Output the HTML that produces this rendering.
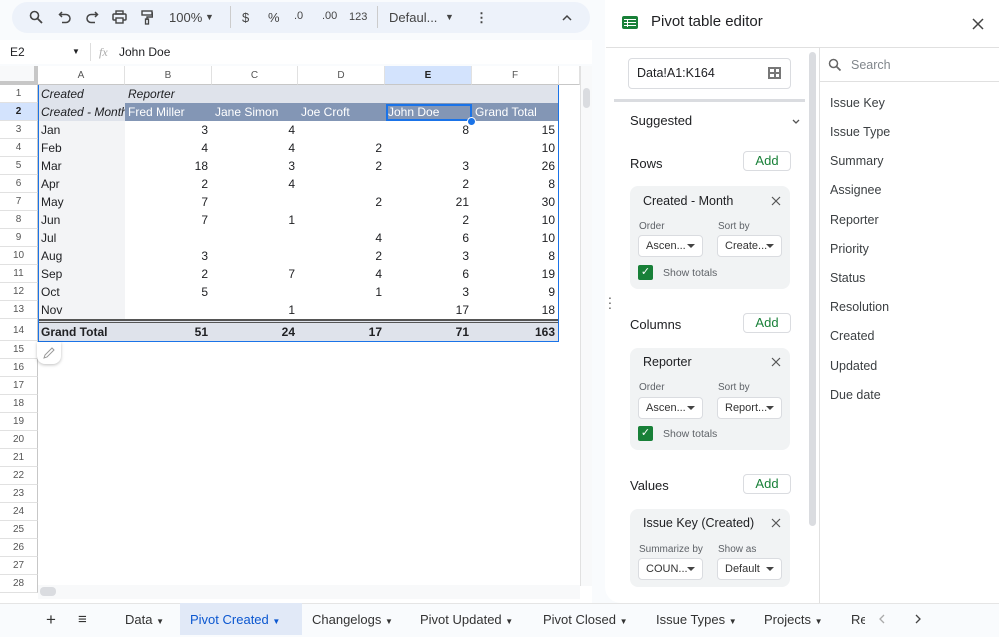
<!DOCTYPE html>
<html><head><meta charset="utf-8"><style>
*{box-sizing:border-box;margin:0;padding:0}
body{width:999px;height:635px;overflow:hidden;background:#f9fbfd;font-family:"Liberation Sans",Arial,sans-serif;position:relative;color:#202124}
.abs{position:absolute}
.tb{left:12px;top:2px;width:578px;height:31px;background:#edf2fa;border-radius:16px;font-size:13px;color:#444}
.tb span{position:absolute;top:8px}
.tb svg{position:absolute;top:8px}
.grid{left:0;top:66px;width:592px;height:537px;background:#fff}
.rh{position:absolute;left:0;width:38px;height:18px;font-size:10px;color:#555;text-align:center;line-height:18px;background:#fff;border-bottom:1px solid #e1e1e1;border-right:1px solid #c7c7c7}
.ch{position:absolute;top:0;height:19px;font-size:10px;color:#555;text-align:center;line-height:19px;border-right:1px solid #e1e1e1;border-bottom:1px solid #c7c7c7;background:#fff}
.c{position:absolute;height:18px;line-height:18px;font-size:12px;padding:0 3px;white-space:nowrap;overflow:hidden}
.panel{left:605px;top:0;width:394px;height:603px;background:#fff;border-radius:0 0 0 16px}
.card{position:absolute;left:630px;width:160px;background:#f1f3f4;border-radius:8px}
.sel{position:absolute;height:22px;border:1px solid #dadce0;background:#fff;border-radius:4px;font-size:11px;line-height:20px;padding-left:7px;color:#333}
.sel:after{content:"";position:absolute;right:7px;top:8px;border:4px solid transparent;border-top:4px solid #444}
.lbl{position:absolute;font-size:10px;color:#5f6368}
.add{position:absolute;left:743px;width:48px;height:20px;border:1px solid #dadce0;border-radius:4px;background:#fff;color:#188038;font-size:13px;text-align:center;line-height:18px}
.h{position:absolute;left:630px;font-size:13px;color:#202124}
.fld{position:absolute;left:830px;font-size:12.5px;color:#3c4043}
.x{position:absolute;width:12px;height:12px}
.chk{position:absolute;width:15px;height:15px;background:#188038;border-radius:2px;color:#fff;font-size:11px;text-align:center;line-height:15px}
.tab{position:absolute;top:604px;height:31px;line-height:31px;font-size:13px;color:#333}
</style></head><body>
<div class="abs tb">
<svg style="left:17px" width="14" height="14" viewBox="0 0 14 14"><circle cx="5.5" cy="5.5" r="4" fill="none" stroke="#444" stroke-width="1.6"/><path d="M8.5 8.5L13 13" stroke="#444" stroke-width="1.8"/></svg>
<svg style="left:46px" width="14" height="14" viewBox="0 0 14 14"><path d="M4 2L1.5 4.5 4 7M2 4.5h6a4 4 0 010 8H4" fill="none" stroke="#444" stroke-width="1.5"/></svg>
<svg style="left:73px" width="14" height="14" viewBox="0 0 14 14"><path d="M10 2l2.5 2.5L10 7M12 4.5H6a4 4 0 000 8h4" fill="none" stroke="#444" stroke-width="1.5"/></svg>
<svg style="left:100px" width="15" height="14" viewBox="0 0 15 14"><rect x="4" y="1" width="7" height="3" fill="none" stroke="#444" stroke-width="1.4"/><rect x="1" y="4" width="13" height="6" rx="1" fill="none" stroke="#444" stroke-width="1.5"/><rect x="4" y="8" width="7" height="5" fill="#edf2fa" stroke="#444" stroke-width="1.4"/></svg>
<svg style="left:129px" width="12" height="15" viewBox="0 0 12 15"><rect x="1" y="1" width="10" height="4" fill="none" stroke="#444" stroke-width="1.4"/><path d="M11 3h0.5v4H6v3" fill="none" stroke="#444" stroke-width="1.4"/><rect x="4.5" y="9" width="3" height="5" fill="none" stroke="#444" stroke-width="1.3"/></svg>
<span style="left:157px">100%</span><span style="left:193px;font-size:9px;top:10px">&#9660;</span>
<span style="left:218px;top:4px;width:1px;height:22px;background:#ccc"></span>
<span style="left:230px">$</span><span style="left:256px">%</span>
<span style="left:282px;font-size:11px">.0</span><span style="left:310px;font-size:11px">.00</span>
<span style="left:337px;font-size:11px;top:9px">123</span>
<span style="left:365px;top:4px;width:1px;height:22px;background:#ccc"></span>
<span style="left:377px">Defaul...</span><span style="left:433px;font-size:9px;top:10px">&#9660;</span>
<span style="left:463px;font-weight:bold">&#8942;</span>
<svg style="left:550px;top:12px" width="10" height="7" viewBox="0 0 10 7"><path d="M1 6l4-4 4 4" fill="none" stroke="#444" stroke-width="1.5"/></svg>
</div>
<div class="abs" style="left:0;top:40px;width:592px;height:24px;background:#fff;font-size:12px;line-height:24px">
<span class="abs" style="left:10px">E2</span><span class="abs" style="left:72px;font-size:8px">&#9660;</span>
<span class="abs" style="left:90px;top:3px;width:1px;height:18px;background:#ddd"></span>
<span class="abs" style="left:99px;color:#aaa;font-style:italic;font-family:'Liberation Serif',serif">fx</span>
<span class="abs" style="left:119px">John Doe</span></div>
<div class="abs grid">
<div class="ch" style="left:0;width:38px;background:#f8f9fa;border-right:4px solid #c7c7c7;border-bottom:4px solid #c7c7c7"></div>
<div class="ch" style="left:38px;width:87px">A</div><div class="ch" style="left:125px;width:87px">B</div><div class="ch" style="left:212px;width:86px">C</div><div class="ch" style="left:298px;width:87px">D</div><div class="ch" style="left:385px;width:87px;background:#d3e3fd;font-weight:bold;color:#222">E</div><div class="ch" style="left:472px;width:87px">F</div><div class="ch" style="left:559px;width:21px"></div>
<div class="abs" style="left:580px;top:0;width:12px;height:520px;background:#f8f9fa;border-left:1px solid #e1e1e1"></div>
<div class="abs" style="left:583px;top:22px;width:7px;height:20px;background:#dadce0;border-radius:4px"></div>
<div class="abs" style="left:38px;top:519px;width:542px;height:14px;background:#f8f9fa"></div>
<div class="abs" style="left:40px;top:521px;width:16px;height:9px;background:#dadce0;border-radius:4px"></div>
</div>
<div class="abs" style="left:0;top:85px;width:592px;height:500px">
<div class="rh" style="top:0">1</div><div class="rh" style="top:18px;background:#d3e3fd;font-weight:bold;color:#222">2</div><div class="rh" style="top:36px">3</div><div class="rh" style="top:54px">4</div><div class="rh" style="top:72px">5</div><div class="rh" style="top:90px">6</div><div class="rh" style="top:108px">7</div><div class="rh" style="top:126px">8</div><div class="rh" style="top:144px">9</div><div class="rh" style="top:162px">10</div><div class="rh" style="top:180px">11</div><div class="rh" style="top:198px">12</div><div class="rh" style="top:216px">13</div><div class="rh" style="top:234px;height:22px;line-height:24px">14</div><div class="rh" style="top:256px">15</div><div class="rh" style="top:274px">16</div><div class="rh" style="top:292px">17</div><div class="rh" style="top:310px">18</div><div class="rh" style="top:328px">19</div><div class="rh" style="top:346px">20</div><div class="rh" style="top:364px">21</div><div class="rh" style="top:382px">22</div><div class="rh" style="top:400px">23</div><div class="rh" style="top:418px">24</div><div class="rh" style="top:436px">25</div><div class="rh" style="top:454px">26</div><div class="rh" style="top:472px">27</div><div class="rh" style="top:490px">28</div>
<div class="abs" style="left:38px;top:0;width:521px;height:18px;background:#dfe3eb"></div>
<div class="abs" style="left:125px;top:18px;width:434px;height:18px;background:#8396b5"></div>
<div class="abs" style="left:38px;top:18px;width:87px;height:18px;background:#dfe3eb"></div>
<div class="abs" style="left:38px;top:36px;width:87px;height:198px;background:#f3f4f6"></div>
<div class="abs" style="left:38px;top:234px;width:521px;height:4px;border-top:2px solid #555;border-bottom:1px solid #555;background:#dfe3eb"></div>
<div class="abs" style="left:38px;top:238px;width:521px;height:18px;background:#dfe3eb"></div>
<div class="abs" style="left:38px;top:0;width:521px;height:257px;border:1px solid #1a73e8;border-top:0"></div>
<div class="abs" style="left:386px;top:19px;width:86px;height:17px;border:2px solid #1a73e8"></div>
<div class="abs" style="left:467px;top:32px;width:9px;height:9px;border-radius:50%;background:#1a73e8;border:1px solid #fff"></div>
<div class="c" style="left:38px;top:0;font-style:italic">Created</div><div class="c" style="left:125px;top:0;font-style:italic">Reporter</div>
<div class="c" style="left:38px;top:18px;font-style:italic;width:87px;padding-right:0">Created - Month</div>
<div class="c" style="left:125px;top:18px;color:#fff">Fred Miller</div><div class="c" style="left:212px;top:18px;color:#fff">Jane Simon</div><div class="c" style="left:298px;top:18px;color:#fff">Joe Croft</div><div class="c" style="left:385px;top:18px;color:#fff">John Doe</div><div class="c" style="left:472px;top:18px;color:#fff">Grand Total</div>
</div>
<div class="abs" style="left:38px;top:121px;width:521px;font-size:12px">
<table style="border-collapse:collapse;font-size:12px;table-layout:fixed;width:521px">
<colgroup><col style="width:87px"><col style="width:87px"><col style="width:86px"><col style="width:87px"><col style="width:87px"><col style="width:87px"></colgroup>
<tbody style="line-height:18px">
<tr><td style="padding-left:3px">Jan</td><td align=right style="padding-right:4px">3</td><td align=right style="padding-right:3px">4</td><td></td><td align=right style="padding-right:3px">8</td><td align=right style="padding-right:4px">15</td></tr>
<tr><td style="padding-left:3px">Feb</td><td align=right style="padding-right:4px">4</td><td align=right style="padding-right:3px">4</td><td align=right style="padding-right:3px">2</td><td></td><td align=right style="padding-right:4px">10</td></tr>
<tr><td style="padding-left:3px">Mar</td><td align=right style="padding-right:4px">18</td><td align=right style="padding-right:3px">3</td><td align=right style="padding-right:3px">2</td><td align=right style="padding-right:3px">3</td><td align=right style="padding-right:4px">26</td></tr>
<tr><td style="padding-left:3px">Apr</td><td align=right style="padding-right:4px">2</td><td align=right style="padding-right:3px">4</td><td></td><td align=right style="padding-right:3px">2</td><td align=right style="padding-right:4px">8</td></tr>
<tr><td style="padding-left:3px">May</td><td align=right style="padding-right:4px">7</td><td></td><td align=right style="padding-right:3px">2</td><td align=right style="padding-right:3px">21</td><td align=right style="padding-right:4px">30</td></tr>
<tr><td style="padding-left:3px">Jun</td><td align=right style="padding-right:4px">7</td><td align=right style="padding-right:3px">1</td><td></td><td align=right style="padding-right:3px">2</td><td align=right style="padding-right:4px">10</td></tr>
<tr><td style="padding-left:3px">Jul</td><td></td><td></td><td align=right style="padding-right:3px">4</td><td align=right style="padding-right:3px">6</td><td align=right style="padding-right:4px">10</td></tr>
<tr><td style="padding-left:3px">Aug</td><td align=right style="padding-right:4px">3</td><td></td><td align=right style="padding-right:3px">2</td><td align=right style="padding-right:3px">3</td><td align=right style="padding-right:4px">8</td></tr>
<tr><td style="padding-left:3px">Sep</td><td align=right style="padding-right:4px">2</td><td align=right style="padding-right:3px">7</td><td align=right style="padding-right:3px">4</td><td align=right style="padding-right:3px">6</td><td align=right style="padding-right:4px">19</td></tr>
<tr><td style="padding-left:3px">Oct</td><td align=right style="padding-right:4px">5</td><td></td><td align=right style="padding-right:3px">1</td><td align=right style="padding-right:3px">3</td><td align=right style="padding-right:4px">9</td></tr>
<tr><td style="padding-left:3px">Nov</td><td></td><td align=right style="padding-right:3px">1</td><td></td><td align=right style="padding-right:3px">17</td><td align=right style="padding-right:4px">18</td></tr>
<tr style="height:4px"><td colspan=6></td></tr>
<tr style="font-weight:bold"><td style="padding-left:3px">Grand Total</td><td align=right style="padding-right:4px">51</td><td align=right style="padding-right:3px">24</td><td align=right style="padding-right:3px">17</td><td align=right style="padding-right:3px">71</td><td align=right style="padding-right:4px">163</td></tr>
</tbody></table></div>
<div class="abs" style="left:37px;top:342px;width:24px;height:22px;background:#fff;border-radius:0 0 8px 8px;box-shadow:0 1px 3px rgba(0,0,0,.25)"><svg class="abs" style="left:5px;top:4px" width="14" height="14" viewBox="0 0 14 14"><path d="M2 12l1-3 7-7 2 2-7 7z" fill="none" stroke="#999" stroke-width="1"/></svg></div>
<div class="abs panel"></div>
<div class="abs" style="left:622px;top:16px;width:16px;height:13px;background:#188038;border-radius:2px"><div class="abs" style="left:2px;top:3px;width:12px;height:1px;background:#fff"></div><div class="abs" style="left:2px;top:6px;width:12px;height:1px;background:#fff"></div><div class="abs" style="left:2px;top:9px;width:12px;height:1px;background:#fff"></div><div class="abs" style="left:5px;top:3px;width:1px;height:8px;background:#fff"></div></div>
<div class="abs" style="left:651px;top:13px;font-size:15px;color:#202124">Pivot table editor</div>
<svg class="x" style="left:972px;top:18px" viewBox="0 0 12 12"><path d="M1 1l10 10M11 1L1 11" stroke="#444" stroke-width="1.5"/></svg>
<div class="abs" style="left:606px;top:47px;width:393px;height:1px;background:#e0e0e0"></div>
<div class="abs" style="left:819px;top:48px;width:1px;height:555px;background:#e0e0e0"></div>
<div class="abs" style="left:809px;top:52px;width:7px;height:474px;background:#dadce0;border-radius:4px"></div>
<div class="abs" style="left:628px;top:58px;width:163px;height:31px;border:1px solid #dadce0;border-radius:4px;font-size:12.5px;line-height:29px;padding-left:8px">Data!A1:K164</div>
<div class="abs" style="left:768px;top:67px;width:13px;height:12px;border:2px solid #777"><div class="abs" style="left:3.5px;top:-2px;width:2px;height:12px;background:#777"></div><div class="abs" style="left:-2px;top:3px;width:13px;height:2px;background:#777"></div></div>
<div class="abs" style="left:614px;top:99px;width:191px;height:3px;background:#dadce0"></div>
<div class="h" style="top:113px">Suggested</div>
<svg class="abs" style="left:792px;top:119px" width="8" height="6" viewBox="0 0 8 6"><path d="M1 1l3 3 3-3" fill="none" stroke="#555" stroke-width="1.3"/></svg>
<div class="h" style="top:156px">Rows</div><div class="add" style="top:151px">Add</div>
<div class="card" style="top:186px;height:103px"></div>
<div class="abs" style="left:643px;top:194px;font-size:12.5px">Created - Month</div>
<svg class="x" style="left:771px;top:196px;width:10px;height:10px" viewBox="0 0 10 10"><path d="M1 1l8 8M9 1L1 9" stroke="#555" stroke-width="1.2"/></svg>
<div class="lbl" style="left:639px;top:221px">Order</div><div class="lbl" style="left:718px;top:221px">Sort by</div>
<div class="sel" style="left:638px;top:235px;width:65px">Ascen...</div><div class="sel" style="left:717px;top:235px;width:65px">Create...</div>
<div class="chk" style="left:638px;top:265px">&#10003;</div><div class="abs" style="left:663px;top:267px;font-size:10.5px;color:#5f6368">Show totals</div>
<div class="abs" style="left:608px;top:292px;font-size:14px;color:#555;line-height:5px">.<br>.<br>.</div>
<div class="h" style="top:317px">Columns</div><div class="add" style="top:313px">Add</div>
<div class="card" style="top:348px;height:102px"></div>
<div class="abs" style="left:643px;top:355px;font-size:12.5px">Reporter</div>
<svg class="x" style="left:771px;top:357px;width:10px;height:10px" viewBox="0 0 10 10"><path d="M1 1l8 8M9 1L1 9" stroke="#555" stroke-width="1.2"/></svg>
<div class="lbl" style="left:639px;top:382px">Order</div><div class="lbl" style="left:718px;top:382px">Sort by</div>
<div class="sel" style="left:638px;top:397px;width:65px">Ascen...</div><div class="sel" style="left:717px;top:397px;width:65px">Report...</div>
<div class="chk" style="left:638px;top:426px">&#10003;</div><div class="abs" style="left:663px;top:428px;font-size:10.5px;color:#5f6368">Show totals</div>
<div class="h" style="top:478px">Values</div><div class="add" style="top:474px">Add</div>
<div class="card" style="top:509px;height:78px"></div>
<div class="abs" style="left:643px;top:516px;font-size:12.5px">Issue Key (Created)</div>
<svg class="x" style="left:771px;top:518px;width:10px;height:10px" viewBox="0 0 10 10"><path d="M1 1l8 8M9 1L1 9" stroke="#555" stroke-width="1.2"/></svg>
<div class="lbl" style="left:639px;top:544px">Summarize by</div><div class="lbl" style="left:718px;top:544px">Show as</div>
<div class="sel" style="left:638px;top:558px;width:65px">COUN...</div><div class="sel" style="left:717px;top:558px;width:65px">Default</div>
<svg class="abs" style="left:828px;top:58px" width="14" height="14" viewBox="0 0 14 14"><circle cx="5.5" cy="5.5" r="4" fill="none" stroke="#666" stroke-width="1.5"/><path d="M8.5 8.5L12.5 12.5" stroke="#666" stroke-width="1.7"/></svg>
<div class="abs" style="left:851px;top:58px;font-size:12.5px;color:#80868b">Search</div>
<div class="abs" style="left:820px;top:81px;width:179px;height:1px;background:#e0e0e0"></div>
<div class="fld" style="top:96px">Issue Key</div><div class="fld" style="top:125px">Issue Type</div><div class="fld" style="top:154px">Summary</div><div class="fld" style="top:183px">Assignee</div><div class="fld" style="top:213px">Reporter</div><div class="fld" style="top:242px">Priority</div><div class="fld" style="top:271px">Status</div><div class="fld" style="top:300px">Resolution</div><div class="fld" style="top:329px">Created</div><div class="fld" style="top:359px">Updated</div><div class="fld" style="top:388px">Due date</div>
<div class="abs" style="left:0;top:603px;width:999px;height:32px;background:#f9fbfd;border-top:1px solid #e5e5e5"></div>
<div class="abs" style="left:180px;top:603px;width:122px;height:32px;background:#e1e9f7"></div>
<div class="tab" style="left:46px;font-size:17px">+</div><div class="tab" style="left:78px;font-size:15px">&#8801;</div>
<div class="tab" style="left:125px">Data <small style="font-size:8px">&#9660;</small></div>
<div class="tab" style="left:190px;color:#0b57d0">Pivot Created <small style="font-size:8px">&#9660;</small></div>
<div class="tab" style="left:312px">Changelogs <small style="font-size:8px">&#9660;</small></div>
<div class="tab" style="left:420px">Pivot Updated <small style="font-size:8px">&#9660;</small></div>
<div class="tab" style="left:543px">Pivot Closed <small style="font-size:8px">&#9660;</small></div>
<div class="tab" style="left:656px">Issue Types <small style="font-size:8px">&#9660;</small></div>
<div class="tab" style="left:764px">Projects <small style="font-size:8px">&#9660;</small></div>
<div class="tab" style="left:851px;width:14px;overflow:hidden">Re</div>
<svg class="abs" style="left:879px;top:614px" width="7" height="10" viewBox="0 0 7 10"><path d="M5 1L1 5l4 4" fill="none" stroke="#aaa" stroke-width="1.3"/></svg>
<svg class="abs" style="left:914px;top:614px" width="7" height="10" viewBox="0 0 7 10"><path d="M2 1l4 4-4 4" fill="none" stroke="#444" stroke-width="1.3"/></svg>
</body></html>
